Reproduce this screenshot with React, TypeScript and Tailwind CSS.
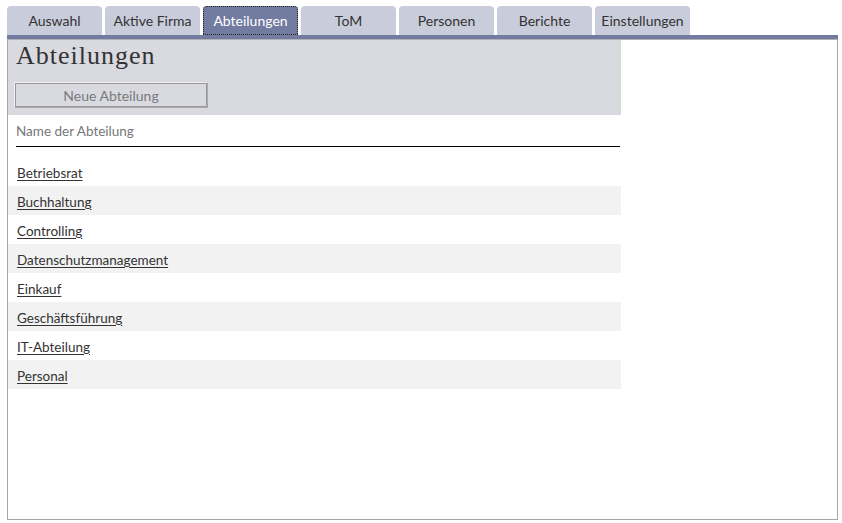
const TABS = ["Auswahl", "Aktive Firma", "Abteilungen", "ToM", "Personen", "Berichte", "Einstellungen"];

const DEPARTMENTS = [
  "Betriebsrat",
  "Buchhaltung",
  "Controlling",
  "Datenschutzmanagement",
  "Einkauf",
  "Geschäftsführung",
  "IT-Abteilung",
  "Personal",
];

function Tab({ label, active }: { label: string; active: boolean }) {
  return (
    <div
      className={`w-[95px] h-[29px] flex items-center justify-center rounded-t-[4px] text-[14px] ${
        active
          ? "bg-[#727ba0] text-white outline outline-1 outline-dotted outline-[#222] -outline-offset-1"
          : "bg-[#c9ccda] text-[#333]"
      }`}
    >
      {label}
    </div>
  );
}

export default function App() {
  return (
    <div className="w-[842px] h-[523px] bg-white pt-[6px] pl-[7px] pr-[4px] font-['Lato','Open_Sans',sans-serif]">
      <div className="flex gap-[3px]">
        {TABS.map((t) => (
          <Tab key={t} label={t} active={t === "Abteilungen"} />
        ))}
      </div>
      <div className="h-[4px] bg-[#737ca0]" />
      <div className="h-[481px] border border-[#a6a6a6] border-t-[#b0b0b8] flex flex-col">
        <div className="w-[613px] bg-[#d9d9e0] pb-[7px] pl-[6px]">
          <h1 className="font-['Liberation_Serif',serif] text-[26px] tracking-[1px] text-[#333] leading-[32px] pl-[2px]">
            Abteilungen
          </h1>
          <button className="mt-[10px] w-[194px] h-[26px] border-2 border-[#f0f0f0] border-r-[#aaa] border-b-[#aaa] outline outline-1 outline-[#999] -outline-offset-2 text-[14px] text-[#7a7a7a] bg-[#d9d9e0]">
            Neue Abteilung
          </button>
        </div>
        <div className="w-[612px] pl-[8px] pt-[8px]">
          <div className="text-[13.5px] text-[#777] h-[24px] leading-[17px] border-b border-black">
            Name der Abteilung
          </div>
        </div>
        <div className="w-[613px] mt-[10px]">
          {DEPARTMENTS.map((d, i) => (
            <div
              key={d}
              className={`h-[29px] flex items-center pl-[9px] pt-[3px] ${i % 2 === 1 ? "bg-[#f2f2f2]" : "bg-white"}`}
            >
              <a href="#" className="text-[13.5px] text-[#333] underline underline-offset-2 decoration-[#333]">
                {d}
              </a>
            </div>
          ))}
        </div>
      </div>
    </div>
  );
}
